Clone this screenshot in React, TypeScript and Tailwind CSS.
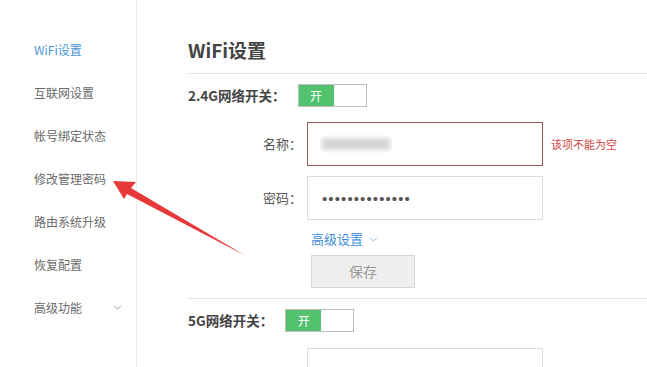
import React from 'react'

const menu = ['WiFi设置', '互联网设置', '帐号绑定状态', '修改管理密码', '路由系统升级', '恢复配置']

function Toggle() {
  return (
    <div className="flex h-[23px] w-[69px] border border-[#bdbdbd] bg-white">
      <div className="flex w-[35px] items-center justify-center bg-[#52c26e] text-[12px] leading-none text-white">开</div>
    </div>
  )
}

function Chevron({ className }: { className?: string }) {
  return (
    <svg viewBox="0 0 10 6" className={className} fill="none" stroke="currentColor" strokeWidth="1.1">
      <path d="M1 1l4 4 4-4" />
    </svg>
  )
}

export default function App() {
  return (
    <div className="relative flex h-[367px] w-[647px] overflow-hidden bg-white [font-family:'Noto_Sans_CJK_SC','Noto_Sans',sans-serif]">
      {/* Sidebar */}
      <div className="w-[137px] shrink-0 border-r border-[#ececec] pt-[28px]">
        {menu.map((m, i) => (
          <div
            key={m}
            className={`h-[43px] pl-[34px] text-[12px] leading-[43px] ${i === 0 ? 'text-[#4a97d6]' : 'text-[#6a6a6a]'}`}
          >
            {m}
          </div>
        ))}
        <div className="flex h-[43px] items-center pl-[34px] text-[12px] text-[#6a6a6a]">
          <span>高级功能</span>
          <Chevron className="ml-[31px] h-[5px] w-[9px] text-[#999]" />
        </div>
      </div>

      {/* Main */}
      <div className="flex-1 pl-[51px]">
        <div className="border-b border-[#e3e3e3] pt-[38px] pb-[11px] text-[19px] font-bold leading-[24px] text-[#444]">
          WiFi设置
        </div>

        <div className="mt-[10px] flex h-[23px] items-center">
          <span className="text-[13.5px] font-bold text-[#444]">2.4G网络开关：</span>
          <div className="ml-[12px]"><Toggle /></div>
        </div>

        <div className="mt-[15px] flex items-center">
          <span className="w-[119px] pr-[5px] text-right text-[13px] text-[#555]">名称：</span>
          <div className="flex h-[44px] w-[236px] items-center border border-[#9c5a5a] bg-white">
            <div className="ml-[14px] h-[12px] w-[68px] bg-[#d6d6d6] blur-[2px]" />
          </div>
          <span className="ml-[8px] text-[11px] text-[#d0453f]">该项不能为空</span>
        </div>

        <div className="mt-[10px] flex items-center">
          <span className="w-[119px] pr-[5px] text-right text-[13px] text-[#555]">密码：</span>
          <div className="flex h-[44px] w-[236px] items-center border border-[#dcdcdc] bg-white pl-[14px] text-[15px] leading-none tracking-[1.1px] text-[#555] [font-family:'Liberation_Sans',sans-serif]">
            ••••••••••••••
          </div>
        </div>

        <div className="mt-[10px] ml-[123px] flex h-[18px] items-center text-[13px] text-[#3f8fd8]">
          <span>高级设置</span>
          <Chevron className="ml-[6px] h-[5px] w-[9px] text-[#7fb2e0]" />
        </div>

        <div className="mt-[7px] ml-[123px] flex h-[33px] w-[104px] items-center justify-center border border-[#d6d6d6] bg-[#efefef] text-[14px] text-[#9a9a9a]">
          保存
        </div>

        <div className="mt-[10px] border-b border-[#e3e3e3]" />

        <div className="mt-[10px] flex h-[23px] items-center">
          <span className="text-[13.5px] font-bold text-[#444]">5G网络开关：</span>
          <div className="ml-[12px]"><Toggle /></div>
        </div>

        <div className="mt-[16px] flex items-start">
          <span className="w-[119px] pr-[5px] text-right text-[13px] text-[#555]" />
          <div className="h-[44px] w-[236px] border border-[#dcdcdc] bg-white" />
        </div>
      </div>

      {/* Red arrow annotation */}
      <svg className="pointer-events-none absolute left-0 top-0" width="647" height="367" viewBox="0 0 647 367">
        <path d="M113 181 L136 182 L131 188 L246 256 L127 194 L124 199 Z" fill="#e8393a" />
      </svg>
    </div>
  )
}
